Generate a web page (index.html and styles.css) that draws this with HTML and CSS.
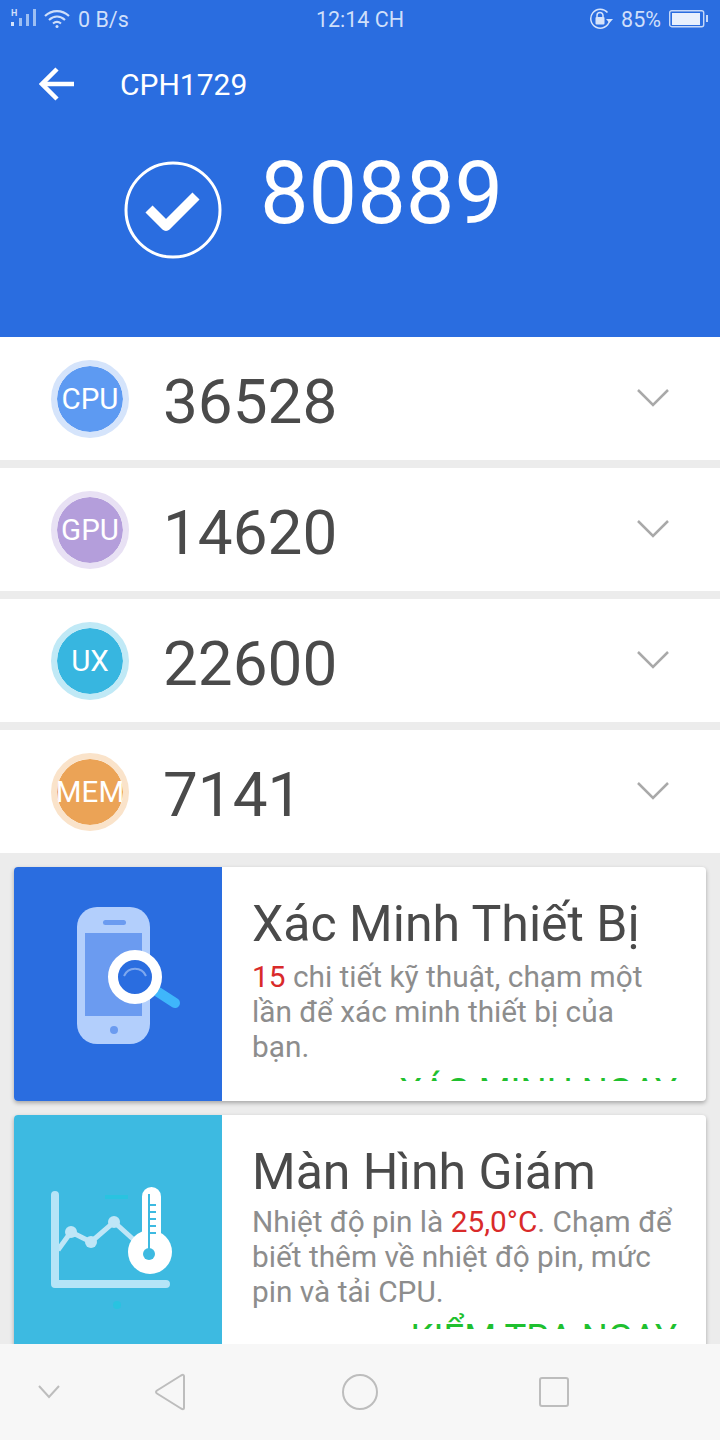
FILE: index.html
```html
<!DOCTYPE html>
<html lang="en">
<head>
    <meta charset="UTF-8">
    <meta name="viewport" content="width=device-width, initial-scale=1.0">
    <title>CPH1729</title>
    <link rel="stylesheet" href="styles.css">
</head>
<body>
    <div class="page">
        <div class="content">
            <!-- Blue header -->
            <header class="header">
                <div class="status-bar">
                    <div class="status-left">
                        <svg class="signal" width="26" height="20" viewBox="0 0 26 20">
                            <text x="0" y="7" class="signal-h">H</text>
                            <rect x="0" y="13" width="3" height="4" fill="#d5e3fb"/>
                            <rect x="8" y="9" width="3" height="8" fill="#9dbff3"/>
                            <rect x="15" y="5" width="3" height="12" fill="#9dbff3"/>
                            <rect x="22" y="0" width="3" height="17" fill="#9dbff3"/>
                        </svg>
                        <svg class="wifi" width="26" height="20" viewBox="0 0 26 20" fill="none" stroke="#cfdffa" stroke-width="2.200">
                            <path d="M1 7 C8 0.500 18 0.500 25 7"/>
                            <path d="M5 11 C10 6.500 16 6.500 21 11"/>
                            <path d="M9 14.500 C11.500 12.500 14.500 12.500 17 14.500"/>
                            <circle cx="13" cy="17.500" r="1.500" fill="#cfdffa" stroke="none"/>
                        </svg>
                        <span>0 B/s</span>
                    </div>
                    <div class="status-time">12:14 CH</div>
                    <div class="status-right">
                        <svg width="24" height="22" viewBox="0 0 24 22" fill="none">
                            <path d="M20.500 13 A9.500 9.500 0 1 1 18.500 4.500" stroke="#d5e3fb" stroke-width="1.500"/>
                            <path d="M17 11 L24 11 L20.500 15 Z" fill="#d5e3fb"/>
                            <path d="M8 9 V7.500 A3 3 0 0 1 14 7.500 V9" stroke="#d5e3fb" stroke-width="1.500"/>
                            <rect x="6.500" y="9" width="9" height="7.500" rx="1" fill="#d5e3fb"/>
                        </svg>
                        <span>85%</span>
                        <svg width="40" height="20" viewBox="0 0 40 20">
                            <rect x="0.700" y="1.700" width="34" height="16" rx="2" fill="none" stroke="#c5d8f8" stroke-width="1.400"/>
                            <rect x="3" y="4" width="28" height="12" fill="#e8f0fd"/>
                            <rect x="37" y="6" width="2" height="7" fill="#c5d8f8"/>
                        </svg>
                    </div>
                </div>
                <div class="title-bar">
                    <svg class="back" width="36" height="34" viewBox="0 0 36 34" fill="none" stroke="#fff" stroke-width="4.500">
                        <path d="M35 17 H3"/>
                        <path d="M18 2 L3 17 L18 32"/>
                    </svg>
                    <span class="device">CPH1729</span>
                </div>
                <div class="total">
                    <svg width="98" height="98" viewBox="0 0 98 98" fill="none" stroke="#fff">
                        <circle cx="49" cy="49" r="47" stroke-width="3"/>
                        <path d="M25 48 L42 65 L72 35" stroke-width="10" stroke-linejoin="round"/>
                    </svg>
                    <span class="total-score">80889</span>
                </div>
            </header>

            <!-- Score rows -->
            <section class="scores">
                <div class="score-row">
                    <div class="badge badge-cpu">CPU</div>
                    <div class="score">36528</div>
                    <svg class="chevron" width="32" height="20" viewBox="0 0 32 20"><path d="M1 2 L16 17 L31 2"/></svg>
                </div>
                <div class="score-row">
                    <div class="badge badge-gpu">GPU</div>
                    <div class="score">14620</div>
                    <svg class="chevron" width="32" height="20" viewBox="0 0 32 20"><path d="M1 2 L16 17 L31 2"/></svg>
                </div>
                <div class="score-row">
                    <div class="badge badge-ux">UX</div>
                    <div class="score">22600</div>
                    <svg class="chevron" width="32" height="20" viewBox="0 0 32 20"><path d="M1 2 L16 17 L31 2"/></svg>
                </div>
                <div class="score-row">
                    <div class="badge badge-mem">MEM</div>
                    <div class="score">7141</div>
                    <svg class="chevron" width="32" height="20" viewBox="0 0 32 20"><path d="M1 2 L16 17 L31 2"/></svg>
                </div>
            </section>

            <!-- Promo cards -->
            <section class="cards">
                <div class="card">
                    <div class="card-art art-blue">
                        <svg class="icon-phone" width="120" height="140" viewBox="0 0 120 140">
                            <rect x="3" y="1" width="73" height="137" rx="20" fill="#b3cffc"/>
                            <rect x="29" y="14" width="23" height="5" rx="2.500" fill="#6b9bf0"/>
                            <rect x="11" y="27" width="57" height="83" fill="#6b9bf0"/>
                            <circle cx="40" cy="124" r="4" fill="#6b9bf0"/>
                            <path d="M84 86 L101 97" stroke="#3fb6fb" stroke-width="10" stroke-linecap="round"/>
                            <circle cx="61" cy="71" r="22" fill="#2a6de0" stroke="#fff" stroke-width="10"/>
                            <path d="M50 70 A12 12 0 0 1 72 70" fill="none" stroke="#7fa8ee" stroke-width="2"/>
                        </svg>
                    </div>
                    <div class="card-body">
                        <div class="card-title">Xác Minh Thiết Bị</div>
                        <div class="card-text"><span class="red">15</span> chi tiết kỹ thuật, chạm một lần để xác minh thiết bị của bạn.</div>
                        <div class="card-action action-one">XÁC MINH NGAY</div>
                    </div>
                </div>
                <div class="card">
                    <div class="card-art art-cyan">
                        <svg class="icon-chart" width="124" height="130" viewBox="0 0 124 130">
                            <path d="M8 63 L21 45 L41 55 L64 35 L84 53" fill="none" stroke="#bfe6f7" stroke-width="5"/>
                            <circle cx="21" cy="45" r="6" fill="#bfe6f7"/>
                            <circle cx="41" cy="55" r="6" fill="#bfe6f7"/>
                            <circle cx="64" cy="35" r="6" fill="#bfe6f7"/>
                            <path d="M5 8 V97 H116" fill="none" stroke="#b5e4f7" stroke-width="8" stroke-linecap="round" stroke-linejoin="round"/>
                            <rect x="55" y="8" width="23" height="4" fill="#29c3e0"/>
                            <circle cx="67" cy="118" r="4" fill="#29c3e0"/>
                            <rect x="92" y="0" width="19" height="60" rx="9.500" fill="#fff"/>
                            <circle cx="100" cy="65" r="22" fill="#fff"/>
                            <rect x="98" y="7" width="2" height="55" fill="#3dbae1"/>
                            <path d="M100 18 h6 M100 25 h6 M100 32 h6 M100 39 h6 M100 46 h6" stroke="#3dbae1" stroke-width="2"/>
                            <circle cx="99" cy="67" r="6" fill="#3dbae1"/>
                        </svg>
                    </div>
                    <div class="card-body">
                        <div class="card-title">Màn Hình Giám</div>
                        <div class="card-text text-two">Nhiệt độ pin là <span class="red">25,0°C</span>. Chạm để biết thêm về nhiệt độ pin, mức pin và tải CPU.</div>
                        <div class="card-action action-two">KIỂM TRA NGAY</div>
                    </div>
                </div>
            </section>
        </div>

        <!-- Android nav bar -->
        <nav class="nav-bar">
            <svg class="nav-hide" width="24" height="16" viewBox="0 0 24 16"><path d="M2 2 L12 13 L22 2"/></svg>
            <svg class="nav-back" width="32" height="38" viewBox="0 0 32 38"><path d="M30 3 V35 Q30 37 27 35.500 L3 20.500 Q1 19 3 17.500 L27 2.500 Q30 1 30 3 Z"/></svg>
            <svg class="nav-home" width="36" height="36" viewBox="0 0 36 36"><circle cx="18" cy="18" r="17"/></svg>
            <svg class="nav-recent" width="30" height="30" viewBox="0 0 30 30"><rect x="1" y="1" width="28" height="28" rx="2"/></svg>
        </nav>
    </div>
</body>
</html>
```

FILE: styles.css
```css
* {
    box-sizing: border-box;
}
html, body {
    margin: 0;
    padding: 0;
}
body {
    font-family: Roboto, 'Noto Sans', sans-serif;
    background: #ececec;
}
.page {
    width: 720px;
    height: 1440px;
    display: flex;
    flex-direction: column;
    overflow: hidden;
}
.content {
    height: 1344px;
    overflow: hidden;
}

/* header */
.header {
    height: 337px;
    background: #2a6de0;
    color: #fff;
}
.status-bar {
    height: 38px;
    padding: 0 11px;
    position: relative;
    display: flex;
    justify-content: space-between;
    align-items: center;
    font-size: 21.500px;
    color: #cfdffa;
}
.status-left, .status-right {
    display: flex;
    align-items: center;
}
.status-left svg {
    margin-right: 7px;
}
.status-left span {
    margin-left: 1px;
}
.status-right {
    gap: 8px;
}
.signal-h {
    font-size: 9px;
    font-weight: 700;
    fill: #cfdffa;
}
.status-time {
    position: absolute;
    left: 0;
    right: 0;
    text-align: center;
}
.title-bar {
    height: 64px;
    margin-top: 14px;
    padding: 0 0 0 39px;
    display: flex;
    align-items: center;
}
.back {
    margin-right: 45px;
}
.device {
    font-size: 30px;
}
.total {
    display: flex;
    align-items: flex-start;
    margin-top: 41px;
    padding-left: 124px;
}
.total svg {
    margin-top: 4px;
}
.total-score {
    font-size: 86.500px;
    line-height: 100px;
    margin-left: 38px;
    margin-top: -13px;
}

/* score rows */
.scores {
    display: flex;
    flex-direction: column;
    gap: 8px;
}
.score-row {
    height: 123px;
    background: #fff;
    display: flex;
    align-items: center;
    padding: 0 51px;
}
.badge {
    width: 78px;
    height: 78px;
    border-radius: 50%;
    border: 6px solid;
    display: flex;
    justify-content: center;
    align-items: center;
    color: #fff;
    font-size: 29.500px;
    flex-shrink: 0;
    white-space: nowrap;
    background-clip: padding-box;
}
.badge-cpu {
    background-color: #5d9af2;
    border-color: #d5e4fb;
}
.badge-gpu {
    background-color: #b49edb;
    border-color: #e8e1f4;
}
.badge-ux {
    background-color: #37b6e0;
    border-color: #c0e9f6;
}
.badge-mem {
    background-color: #eba356;
    border-color: #fae3ca;
}
.score {
    font-size: 62px;
    color: #4a4a4a;
    margin-left: 34px;
    padding-top: 5px;
    flex: 1;
}
.chevron {
    fill: none;
    stroke: #a9a9a9;
    stroke-width: 2.500;
    margin-top: -2px;
}

/* cards */
.cards {
    padding: 14px;
    display: flex;
    flex-direction: column;
    gap: 14px;
}
.card {
    height: 234px;
    flex-shrink: 0;
    display: flex;
    background: #fff;
    border-radius: 4px;
    box-shadow: 0 2px 4px rgba(0, 0, 0, 0.3);
    overflow: hidden;
}
.card-art {
    width: 208px;
    flex-shrink: 0;
    display: flex;
    justify-content: center;
    align-items: center;
}
.art-blue {
    background: #2a6de0;
}
.art-cyan {
    background: #3dbae1;
}
.icon-phone {
    margin: 0 0 16px 32px;
}
.icon-chart {
    margin: 40px 12px 0 0;
}
.card-body {
    flex: 1;
    height: 214px;
    padding: 27px 24px 0 30px;
    overflow: hidden;
}
.card-title {
    font-size: 50px;
    line-height: 60px;
    color: #4a4a4a;
    white-space: nowrap;
}
.card-text {
    font-size: 29.800px;
    line-height: 35px;
    color: #8d8d8d;
    margin-top: 5px;
    padding-right: 6px;
}
.text-two {
    margin-top: 2px;
}
.red {
    color: #d92a2a;
}
/* the action label is cut off by the card body, as on the device */
.card-action {
    font-size: 36.600px;
    color: #1fc02f;
    white-space: nowrap;
    text-align: right;
    margin-right: 5px;
}
.action-one {
    margin-top: 6px;
}
.action-two {
    margin-top: 7px;
}

/* nav bar */
.nav-bar {
    height: 96px;
    background: #f7f7f7;
    display: flex;
    align-items: center;
    padding: 0 150px 0 37px;
}
.nav-bar svg {
    fill: none;
    stroke: #bdbdbd;
    stroke-width: 2;
}
.nav-back {
    margin-left: 93px;
}
.nav-home {
    margin-left: 156px;
}
.nav-recent {
    margin-left: 161px;
}
```
